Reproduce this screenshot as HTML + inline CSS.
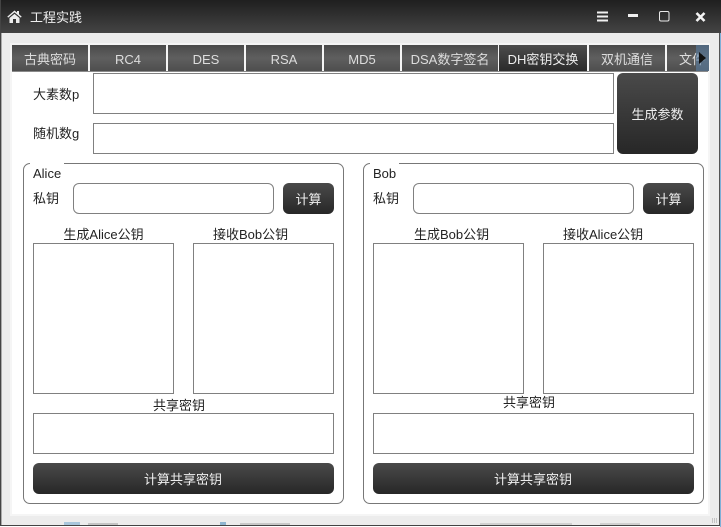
<!DOCTYPE html>
<html><head><meta charset="utf-8">
<style>
html,body{margin:0;padding:0;background:#f0f0f0;}
body{width:721px;height:527px;position:relative;overflow:hidden;font-family:"Liberation Sans","Noto Sans CJK SC",sans-serif;font-size:13px;color:#222;}
div{position:absolute;box-sizing:border-box;}
.tb{left:0;top:0;width:721px;height:33px;background:linear-gradient(#1f1f1f,#444);}
.title{left:30px;top:9px;color:#eee;font-size:13px;line-height:18px;}
.panel{left:12px;top:71px;width:696px;height:443px;background:#fff;}
.tab{top:45px;height:26px;background:linear-gradient(#4a4a4a,#5f5f5f 50%,#4e4e4e);color:#ddd;text-align:center;line-height:29px;font-size:13px;white-space:nowrap;overflow:hidden;}
.tab.on{background:linear-gradient(#4c4c4c,#2a2a2a);color:#eee;}
.in{background:#fff;border:1px solid #808080;}
.r{border-radius:6px;}
.btn{background:linear-gradient(#4a4a4a,#272727);color:#eee;text-align:center;border-radius:6px;font-size:13px;}
.l{white-space:nowrap;text-align:center;line-height:18px;color:#222;}
.g{border:1px solid #777;border-radius:7px;background:#fff;}
.leg{background:#fff;height:16px;line-height:18px;padding:0 0 0 3px;color:#222;}
</style></head><body>
<div style="left:0;top:33px;width:721px;height:492px;background:#ececec"></div>
<div style="left:10px;top:43px;width:700px;height:473px;background:#f5f5f5"></div>
<div class="tb"></div>
<svg style="position:absolute;left:7px;top:10px" width="15" height="13" viewBox="0 0 15 13"><path d="M7.5 0.5L0.3 6.6 1.2 7.6 7.5 2.4 13.8 7.6 14.7 6.6 12 4.3V1H10V2.6ZM2.5 8V13H6V9H9V13H12.5V8L7.5 3.9Z" fill="#eee"/></svg>
<div class="title">工程实践</div>
<svg style="position:absolute;left:596px;top:10px" width="112" height="14" viewBox="0 0 112 14" fill="none"><path d="M1 2.5H12M1 6.5H12M1 10.500H12" stroke="#f0f0f0" stroke-width="2"/><path d="M32 5.500H42" stroke="#f0f0f0" stroke-width="3"/><rect x="63.500" y="1.500" width="9.500" height="9.500" rx="1.500" stroke="#e8e8e8" stroke-width="1"/><path d="M100.500 3L108.500 11M108.500 3L100.500 11" stroke="#f4f4f4" stroke-width="2.600"/></svg>

<div class="panel"></div>
<div class="tab" style="left:12px;width:76px">古典密码</div>
<div class="tab" style="left:90px;width:76px">RC4</div>
<div class="tab" style="left:168px;width:76px">DES</div>
<div class="tab" style="left:246px;width:76px">RSA</div>
<div class="tab" style="left:324px;width:76px">MD5</div>
<div class="tab" style="left:402px;width:96px">DSA数字签名</div>
<div class="tab on" style="left:499px;width:88px">DH密钥交换</div>
<div class="tab" style="left:589px;width:76px">双机通信</div>
<div class="tab" style="left:667px;width:42px;text-align:left;padding-left:12px">文件</div>
<div style="left:696px;top:45px;width:13px;height:26px;background:rgba(90,130,170,.55)"></div>
<svg style="position:absolute;left:698px;top:51px" width="9" height="14" viewBox="0 0 9 14"><path d="M1 1L8 7 1 13Z" fill="#111"/></svg>
<div style="left:12px;top:71px;width:696px;height:1px;background:#8a8a8a"></div>

<div class="l" style="left:33px;top:86px">大素数p</div>
<div class="in" style="left:93px;top:73px;width:521px;height:41px"></div>
<div class="l" style="left:33px;top:125px">随机数g</div>
<div class="in" style="left:93px;top:123px;width:521px;height:31px"></div>
<div class="btn" style="left:617px;top:73px;width:81px;height:81px;line-height:84px">生成参数</div>

<div class="g" style="left:23px;top:163px;width:321px;height:341px"></div>
<div class="leg" style="left:30px;top:163px;width:34px;height:20px;line-height:21px">Alice</div>
<div class="l" style="left:33px;top:190px">私钥</div>
<div class="in r" style="left:73px;top:183px;width:201px;height:31px"></div>
<div class="btn" style="left:283px;top:183px;width:51px;height:31px;line-height:33px">计算</div>
<div class="l" style="left:33px;top:226px;width:141px">生成Alice公钥</div>
<div class="l" style="left:213px;top:226px">接收Bob公钥</div>
<div class="in" style="left:33px;top:243px;width:141px;height:151px"></div>
<div class="in" style="left:193px;top:243px;width:141px;height:151px"></div>
<div class="l" style="left:33px;top:397px;width:292px">共享密钥</div>
<div class="in" style="left:33px;top:413px;width:301px;height:41px"></div>
<div class="btn" style="left:33px;top:463px;width:301px;height:31px;line-height:33px;padding-right:1px">计算共享密钥</div>

<div class="g" style="left:363px;top:163px;width:341px;height:341px"></div>
<div class="leg" style="left:370px;top:163px;width:29px;height:20px;line-height:21px">Bob</div>
<div class="l" style="left:373px;top:190px">私钥</div>
<div class="in r" style="left:413px;top:183px;width:221px;height:31px"></div>
<div class="btn" style="left:643px;top:183px;width:51px;height:31px;line-height:33px">计算</div>
<div class="l" style="left:414px;top:226px">生成Bob公钥</div>
<div class="l" style="left:563px;top:226px">接收Alice公钥</div>
<div class="in" style="left:373px;top:243px;width:151px;height:151px"></div>
<div class="in" style="left:543px;top:243px;width:151px;height:151px"></div>
<div class="l" style="left:373px;top:394px;width:312px">共享密钥</div>
<div class="in" style="left:373px;top:413px;width:321px;height:41px"></div>
<div class="btn" style="left:373px;top:463px;width:321px;height:31px;line-height:33px;padding-right:1px">计算共享密钥</div>

<div style="left:0;top:0;width:1px;height:526px;background:#444"></div>
<div style="left:1px;top:33px;width:1px;height:492px;background:#aaa"></div>
<div style="left:64px;top:522px;width:16px;height:3px;background:#a9c6dc"></div>
<div style="left:88px;top:523px;width:30px;height:2px;background:#c4c4c4"></div>
<div style="left:220px;top:522px;width:6px;height:3px;background:#8fb5d0"></div>
<div style="left:240px;top:523px;width:50px;height:2px;background:#c8c8c8"></div>
<div style="left:480px;top:523px;width:92px;height:2px;background:#d0d0d0"></div>
<div style="left:600px;top:523px;width:40px;height:2px;background:#d0d0d0"></div>
<div style="left:0;top:526px;width:721px;height:1px;background:#fff"></div>
<div style="left:0;top:525px;width:720px;height:1px;background:#444"></div>
<div style="left:719px;top:33px;width:1px;height:492px;background:#555"></div>
<div style="left:720px;top:33px;width:1px;height:494px;background:#7fb0d8"></div>
<div style="left:712px;top:518px;width:5px;height:5px;background:repeating-linear-gradient(90deg,#c4c4c4 0 1px,transparent 1px 2px)"></div>
</body></html>
